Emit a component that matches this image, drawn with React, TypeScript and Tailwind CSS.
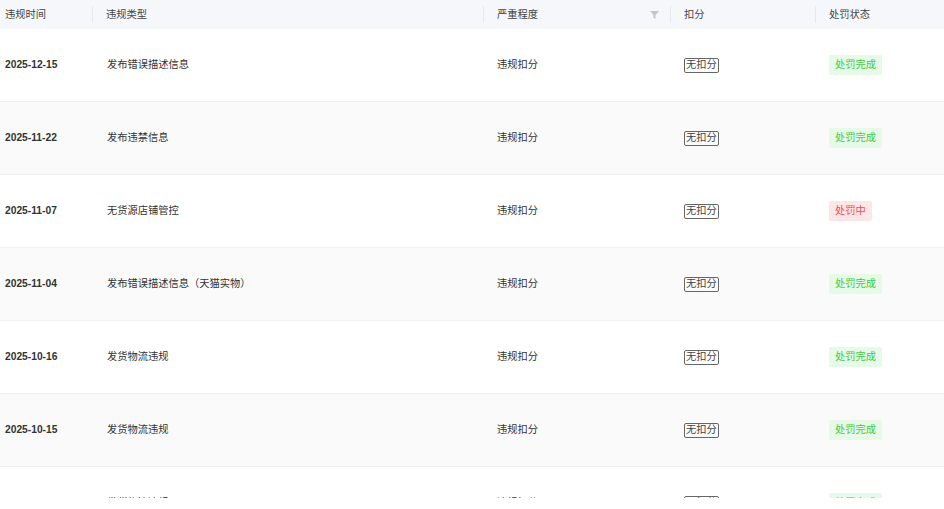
import { Fragment } from "react";

type Status = "done" | "pending";

interface Row {
  date: string;
  type: string;
  level: string;
  score: string;
  status: Status;
}

const rows: Row[] = [
  { date: "2025-12-15", type: "发布错误描述信息", level: "违规扣分", score: "无扣分", status: "done" },
  { date: "2025-11-22", type: "发布违禁信息", level: "违规扣分", score: "无扣分", status: "done" },
  { date: "2025-11-07", type: "无货源店铺管控", level: "违规扣分", score: "无扣分", status: "pending" },
  { date: "2025-11-04", type: "发布错误描述信息（天猫实物）", level: "违规扣分", score: "无扣分", status: "done" },
  { date: "2025-10-16", type: "发货物流违规", level: "违规扣分", score: "无扣分", status: "done" },
  { date: "2025-10-15", type: "发货物流违规", level: "违规扣分", score: "无扣分", status: "done" },
  { date: "2025-10-09", type: "发货物流违规", level: "违规扣分", score: "无扣分", status: "done" },
];

const cols = "grid grid-cols-[92px_391px_187px_145px_1fr]";
const font = { fontFamily: '"Liberation Sans", "Noto Sans CJK SC", sans-serif' };

function FilterIcon() {
  return (
    <svg width="9" height="8" viewBox="0 0 9 8" className="text-[#c4c4c4]">
      <path d="M0 0h9L5.5 4v4l-2-1.2V4z" fill="currentColor" />
    </svg>
  );
}

function HeaderCell({ label, divider = true, filter = false }: { label: string; divider?: boolean; filter?: boolean }) {
  return (
    <div className="flex items-center h-full">
      {divider && <div className="w-px h-[17px] bg-[#e6e8eb]" />}
      <span className={divider ? "ml-[13px]" : "ml-[5px]"}>{label}</span>
      {filter && (
        <div className="ml-auto mr-[11px] flex items-center">
          <FilterIcon />
        </div>
      )}
    </div>
  );
}

function StatusTag({ status }: { status: Status }) {
  if (status === "pending") {
    return (
      <span className="inline-flex items-center h-[20px] px-[6px] rounded-[2px] bg-[#fde6e6] text-[#f24a4a]">
        处罚中
      </span>
    );
  }
  return (
    <span className="inline-flex items-center h-[20px] px-[6px] rounded-[2px] bg-[#e7f9e7] text-[#44c944]">
      处罚完成
    </span>
  );
}

export default function App() {
  return (
    <div className="w-[944px] h-[509px] overflow-hidden bg-white text-[10.25px] text-[#333]" style={font}>
      <div className="h-[498px] overflow-hidden">
        {/* Header */}
        <div className={`${cols} h-[29px] bg-[#f5f7fa] text-[#444]`}>
          <HeaderCell label="违规时间" divider={false} />
          <HeaderCell label="违规类型" />
          <HeaderCell label="严重程度" filter />
          <HeaderCell label="扣分" />
          <HeaderCell label="处罚状态" />
        </div>

        {/* Body */}
        {rows.map((r, i) => (
          <Fragment key={i}>
            <div
              className={`${cols} h-[73px] border-b border-[#f0f0f0] ${i % 2 === 1 ? "bg-[#fafafa]" : "bg-white"}`}
            >
              <div className="flex items-center pl-[5px] font-bold text-[#333]">{r.date}</div>
              <div className="flex items-center pl-[15px]">{r.type}</div>
              <div className="flex items-center pl-[14px]">{r.level}</div>
              <div className="flex items-center pl-[14px]">
                <span className="inline-flex items-center h-[15px] px-[1px] border border-[#666] rounded-[2px] text-[#444] leading-none">
                  {r.score}
                </span>
              </div>
              <div className="flex items-center pl-[14px]">
                <StatusTag status={r.status} />
              </div>
            </div>
          </Fragment>
        ))}
      </div>
    </div>
  );
}
